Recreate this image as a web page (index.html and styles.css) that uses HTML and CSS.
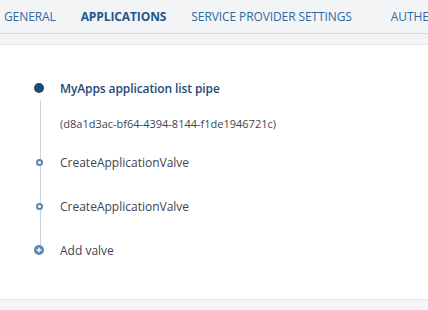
FILE: index.html
```html
<!DOCTYPE html>
<html lang="en">
<head>
    <meta charset="UTF-8">
    <title>Pipe</title>
    <link rel="stylesheet" href="styles.css">
</head>
<body>
    <div class="tabs">
        <a class="tab">GENERAL</a>
        <a class="tab active">APPLICATIONS</a>
        <a class="tab">SERVICE PROVIDER SETTINGS</a>
        <a class="tab">AUTHENTICATION</a>
    </div>

    <div class="card">
        <ul class="pipe">
            <li class="pipe-item head">
                <span class="dot big"></span>
                <span class="pipe-name">MyApps application list pipe</span>
            </li>
            <li class="pipe-item uuid">
                <span class="dot none"></span>
                <span>(d8a1d3ac-bf64-4394-8144-f1de1946721c)</span>
            </li>
            <li class="pipe-item valve">
                <span class="dot ring"></span>
                <span>CreateApplicationValve</span>
            </li>
            <li class="pipe-item valve">
                <span class="dot ring"></span>
                <span>CreateApplicationValve</span>
            </li>
            <li class="pipe-item add">
                <svg class="plus" width="10" height="10" viewBox="0 0 10 10">
                    <circle cx="5" cy="5" r="5" fill="#5b86ae"/>
                    <path d="M2.5 5h5M5 2.5v5" stroke="#fff" stroke-width="1.3"/>
                </svg>
                <span>Add valve</span>
            </li>
        </ul>
    </div>
</body>
</html>
```

FILE: styles.css
```css
body {
    margin: 0;
    font-family: "Open Sans", sans-serif;
    background-color: #f3f4f6;
    color: #3d4650;
}

.tabs {
    display: flex;
    height: 33px;
    align-items: center;
    border-bottom: 1px solid #d4d7db;
    padding-left: 4px;
    gap: 25px;
    white-space: nowrap;
    overflow: hidden;
}

.tab {
    font-size: 12px;
    color: #2f6aa1;
    letter-spacing: -0.1px;
}

.tab.active {
    font-weight: 700;
    color: #21578a;
}

.tab:last-child {
    margin-left: 14px;
}

.card {
    margin-top: 10px;
    background-color: #fff;
    border-top: 1px solid #e6e9ec;
    border-bottom: 1px solid #e2e5e8;
    height: 254px;
}

.pipe {
    list-style: none;
    margin: 0;
    padding: 29px 0 0 34px;
    position: relative;
}

.pipe::before {
    content: "";
    position: absolute;
    left: 40px;
    top: 55px;
    height: 145px;
    width: 1px;
    background-color: #c9d5e1;
}

.pipe-item {
    display: flex;
    align-items: center;
    height: 44px;
    font-size: 12px;
    position: relative;
}

.pipe-item.head {
    height: 28px;
}

.pipe-item.uuid {
    height: 34px;
    padding-top: 4px;
    font-size: 11px;
}

.pipe-name {
    font-weight: 600;
    color: #1d4a74;
    letter-spacing: -0.1px;
}

.dot {
    width: 10px;
    height: 10px;
    margin-right: 16px;
    display: flex;
    justify-content: center;
    align-items: center;
}

.dot.big::after {
    content: "";
    width: 10px;
    height: 10px;
    border-radius: 50%;
    background-color: #1d4a74;
}

.dot.ring::after {
    content: "";
    width: 7px;
    height: 7px;
    box-sizing: border-box;
    border-radius: 50%;
    border: 2px solid #5b86ae;
    background-color: #fff;
}

.plus {
    margin-right: 16px;
    position: relative;
}
```
